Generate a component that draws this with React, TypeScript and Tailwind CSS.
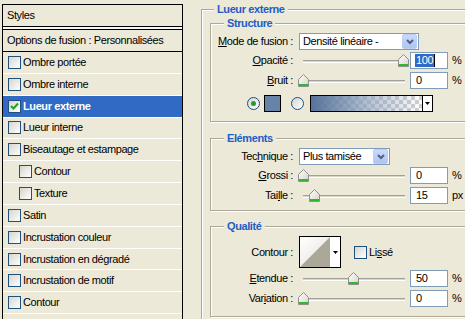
import { ReactNode } from "react";

const layers = [
  { label: "Ombre portée" },
  { label: "Ombre interne" },
  { label: "Lueur externe", checked: true, selected: true },
  { label: "Lueur interne" },
  { label: "Biseautage et estampage" },
  { label: "Contour", indent: true },
  { label: "Texture", indent: true },
  { label: "Satin" },
  { label: "Incrustation couleur" },
  { label: "Incrustation en dégradé" },
  { label: "Incrustation de motif" },
  { label: "Contour" },
  { label: "" },
];

function CheckBox({ checked = false }: { checked?: boolean }) {
  return (
    <span className="flex h-[13px] w-[13px] shrink-0 items-center justify-center border border-[#1C5180] bg-linear-to-br from-[#D6D5CC] to-white">
      {checked && (
        <svg width="9" height="9" viewBox="0 0 9 9">
          <path d="M1 4 L3.5 6.5 L8 1.5" fill="none" stroke="#21A121" strokeWidth="2" />
        </svg>
      )}
    </span>
  );
}

function Radio({ checked = false }: { checked?: boolean }) {
  return (
    <span className="flex h-[13px] w-[13px] shrink-0 items-center justify-center rounded-full border border-[#1C5180] bg-linear-to-br from-[#D6D5CC] to-white">
      {checked && <span className="h-[5px] w-[5px] rounded-full bg-[#21A121]" />}
    </span>
  );
}

function DownTri() {
  return (
    <svg width="5" height="3" viewBox="0 0 5 3">
      <path d="M0 0 H5 L2.5 3 Z" fill="#000" />
    </svg>
  );
}

function Select({ text, width }: { text: string; width: string }) {
  return (
    <div className={`ml-[6px] flex h-[17px] items-center border border-[#7F9DB9] bg-white pl-[3px] ${width}`}>
      <span className="flex-1 whitespace-nowrap">{text}</span>
      <span className="mr-px flex h-[15px] w-[15px] items-center justify-center rounded-[2px] border border-[#BBCDF5] bg-linear-to-b from-[#CBDAFB] to-[#AFC4F1]">
        <svg width="8" height="6" viewBox="0 0 8 6">
          <path d="M1 1 L4 4 L7 1" fill="none" stroke="#4D6185" strokeWidth="2" />
        </svg>
      </span>
    </div>
  );
}

function Thumb() {
  return (
    <svg width="11" height="13" viewBox="0 0 11 13">
      <defs>
        <linearGradient id="thumbFill" x1="0" y1="0" x2="1" y2="1">
          <stop offset="0" stopColor="#FFFFFF" />
          <stop offset="1" stopColor="#D4D2C8" />
        </linearGradient>
      </defs>
      <path d="M0.5 5.5 L5.5 0.5 L10.5 5.5 L10.5 12.5 L0.5 12.5 Z" fill="url(#thumbFill)" stroke="#8E8F8F" />
      <rect x="1" y="10" width="9" height="2" fill="#2DB82D" />
    </svg>
  );
}

function SliderRow({
  label,
  pos,
  value,
  unit,
  selected = false,
}: {
  label: ReactNode;
  pos: number;
  value: string;
  unit: string;
  selected?: boolean;
}) {
  return (
    <div className="flex h-[20px] items-center">
      <div className="w-[82px] shrink-0 text-right whitespace-nowrap">{label}</div>
      <div className="relative ml-[5px] flex h-[20px] w-[110px] shrink-0 items-center pl-[5px] pr-[3px]">
        <div className="mt-[3px] h-[3px] w-full border-t border-b border-t-[#A3A195] border-b-white bg-[#D8D5C9]" />
        <div className="absolute top-[4px] h-[13px] w-[11px]" style={{ left: pos }}>
          <Thumb />
        </div>
      </div>
      <div className="ml-[2px] flex h-[17px] w-[38px] shrink-0 items-center border border-[#7F9DB9] bg-white pl-[4px]">
        {selected ? (
          <>
            <span className="bg-[#316AC5] px-px leading-[13px] text-white">{value}</span>
            <span className="h-[13px] w-px bg-black" />
          </>
        ) : (
          <span className="pl-px">{value}</span>
        )}
      </div>
      <span className="ml-[4px]">{unit}</span>
    </div>
  );
}

function Title({ children, className }: { children: ReactNode; className: string }) {
  return (
    <div className={`-mt-[7px] w-fit bg-[#ECE9D8] px-[3px] font-bold leading-[13px] text-[#215DC6] ${className}`}>
      {children}
    </div>
  );
}

function Group({ title, className, children }: { title: string; className: string; children: ReactNode }) {
  return (
    <div className={`border border-[#ACA899] shadow-[inset_1px_1px_0_#fff,1px_1px_0_#fff] ${className}`}>
      <Title className="ml-[13px]">{title}</Title>
      {children}
    </div>
  );
}

export default function App() {
  return (
    <div className="flex h-[319px] w-[465px] overflow-hidden bg-[#ECE9D8] font-['Liberation_Sans',Arial,sans-serif] text-[11px] leading-[13px] tracking-[-0.4px] text-black">
      {/* Styles list */}
      <div className="mt-[4px] ml-[2px] w-[181px] shrink-0 self-start border-x border-t border-black">
        <div className="flex h-[22px] items-center border-b border-black pl-[4px]">Styles</div>
        <div className="h-[2px] bg-[#F7F6F1]" />
        <div className="flex h-[23px] items-center border-y border-black pl-[4px] whitespace-nowrap">
          Options de fusion : Personnalisées
        </div>
        {layers.map((l, i) => (
          <div
            key={i}
            className={`flex h-[21.85px] items-center border-b border-white ${l.indent ? "pl-[16px]" : "pl-[5px]"} ${
              l.selected ? "bg-[#316AC5] font-bold text-white" : ""
            }`}
          >
            {l.label && (
              <>
                <CheckBox checked={l.checked} />
                <span className="ml-[2px] whitespace-nowrap">{l.label}</span>
              </>
            )}
          </div>
        ))}
      </div>

      {/* Options */}
      <div className="min-w-0 flex-1 overflow-hidden pt-[9px] pl-[18px]">
        <div className="h-[330px] w-[300px] border-t border-l border-[#ACA899] pl-[8px] shadow-[inset_1px_1px_0_#fff]">
          <Title className="ml-[4px]">Lueur externe</Title>

          <Group title="Structure" className="mt-[7px] pb-[9px]">
            <div className="mt-[3px] flex h-[17px] items-center">
              <div className="w-[82px] shrink-0 text-right whitespace-nowrap">
                <u>M</u>ode de fusion :
              </div>
              <Select text="Densité linéaire -" width="w-[120px]" />
            </div>
            <SliderRow label={<><u>O</u>pacité :</>} pos={100} value="100" unit="%" selected />
            <SliderRow label={<><u>B</u>ruit :</>} pos={0} value="0" unit="%" />
            <div className="mt-[5px] flex h-[17px] items-center pl-[36px]">
              <Radio checked />
              <span className="ml-[4px] h-[17px] w-[17px] border border-black bg-[#6784A8]" />
              <span className="ml-[10px]">
                <Radio />
              </span>
              <div className="ml-[6px] flex h-[17px] w-[123px] border border-black">
                <div className="flex-1 bg-[conic-gradient(#CFCFCF_25%,#fff_0_50%,#CFCFCF_0_75%,#fff_0)] bg-[length:8px_8px]">
                  <div className="h-full bg-linear-to-r from-[#57739A] via-[#8EA2BE]/70 to-transparent" />
                </div>
                <div className="flex w-[10px] items-center justify-center border-l border-black bg-white">
                  <DownTri />
                </div>
              </div>
            </div>
          </Group>

          <Group title="Eléments" className="mt-[16px] pb-[5px]">
            <div className="mt-[3px] flex h-[17px] items-center">
              <div className="w-[82px] shrink-0 text-right whitespace-nowrap">
                Tec<u>h</u>nique :
              </div>
              <Select text="Plus tamisée" width="w-[91px]" />
            </div>
            <SliderRow label={<><u>G</u>rossi :</>} pos={0} value="0" unit="%" />
            <SliderRow label={<>Tai<u>l</u>le :</>} pos={11} value="15" unit="px" />
          </Group>

          <Group title="Qualité" className="mt-[15px] pb-[8px]">
            <div className="mt-[3px] flex h-[32px] items-center">
              <div className="w-[82px] shrink-0 text-right whitespace-nowrap">Contour :</div>
              <div className="ml-[6px] flex h-[32px] w-[42px] border border-black bg-white">
                <svg width="30" height="30" viewBox="0 0 30 30">
                  <defs>
                    <linearGradient id="cbg" x1="0" y1="0" x2="1" y2="1">
                      <stop offset="0" stopColor="#FFFFFF" />
                      <stop offset="1" stopColor="#E4E2D8" />
                    </linearGradient>
                  </defs>
                  <rect width="30" height="30" fill="url(#cbg)" />
                  <path d="M0 30 L30 0 L30 30 Z" fill="#ACA899" />
                </svg>
                <div className="flex flex-1 items-center justify-center">
                  <DownTri />
                </div>
              </div>
              <span className="ml-[13px]">
                <CheckBox />
              </span>
              <span className="ml-[2px]">
                Li<u>s</u>sé
              </span>
            </div>
            <SliderRow label={<><u>E</u>tendue :</>} pos={50} value="50" unit="%" />
            <SliderRow label={<>Var<u>i</u>ation :</>} pos={0} value="0" unit="%" />
          </Group>
        </div>
      </div>
    </div>
  );
}
